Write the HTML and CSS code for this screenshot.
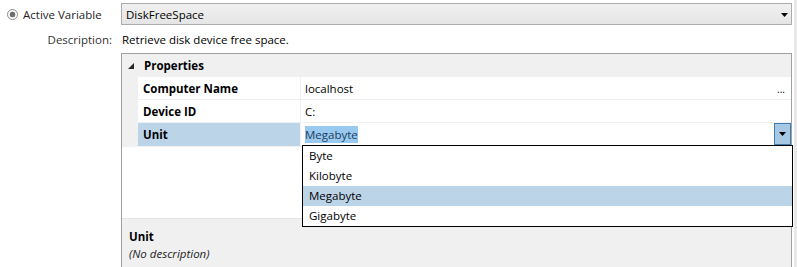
FILE: index.html
```html
<!DOCTYPE html>
<html lang="en">
<head>
    <meta charset="UTF-8">
    <title>Active Variable</title>
    <link rel="stylesheet" href="styles.css">
</head>
<body>
    <div class="page">
        <div class="content">
            <div class="var-row">
                <label class="radio-label"><span class="radio"></span>Active Variable</label>
                <div class="combo">
                    <span>DiskFreeSpace</span>
                    <svg class="arrow" width="7" height="4" viewBox="0 0 7 4"><polygon points="0,0 7,0 3.5,4" fill="#000"/></svg>
                </div>
            </div>

            <div class="desc-row">
                <span class="desc-label">Description:</span>
                <span class="desc-text">Retrieve disk device free space.</span>
            </div>

            <div class="grid">
                <div class="grid-header">
                    <svg class="expander" width="6" height="6" viewBox="0 0 6 6"><polygon points="6,0 6,6 0,6" fill="#262626"/></svg>
                    Properties
                </div>

                <div class="prop-row">
                    <div class="gutter"></div>
                    <div class="prop-name">Computer Name</div>
                    <div class="prop-value">localhost<span class="ellipsis">...</span></div>
                </div>
                <div class="prop-row">
                    <div class="gutter"></div>
                    <div class="prop-name">Device ID</div>
                    <div class="prop-value">C:</div>
                </div>
                <div class="prop-row selected">
                    <div class="gutter"></div>
                    <div class="prop-name">Unit</div>
                    <div class="prop-value">
                        <span class="text-selected">Megabyte</span>
                        <span class="drop-btn">
                            <svg width="7" height="4" viewBox="0 0 7 4"><polygon points="0,0 7,0 3.5,4" fill="#000"/></svg>
                        </span>
                    </div>
                </div>

                <div class="grid-empty"></div>

                <div class="help">
                    <div class="help-title">Unit</div>
                    <div class="help-text">(No description)</div>
                </div>

                <!-- liste ouverte du combo Unit -->
                <ul class="popup">
                    <li>Byte</li>
                    <li>Kilobyte</li>
                    <li class="current">Megabyte</li>
                    <li>Gigabyte</li>
                </ul>
            </div>
        </div>
        <div class="scroll-strip"></div>
    </div>
</body>
</html>
```

FILE: styles.css
```css
body {
    margin: 0;
    background-color: #fff;
    font-family: "Open Sans", "Noto Sans", sans-serif;
    font-size: 11.5px;
    color: #000;
    overflow: hidden;
}
.page {
    display: flex;
    width: 797px;
    height: 267px;
    overflow: hidden;
}
.content {
    width: 792px;
    padding-right: 2px;
}
.scroll-strip {
    width: 3px;
    background-color: #e8e8e8;
}
.var-row {
    display: grid;
    grid-template-columns: 121px 1fr;
    margin-top: 3px;
    height: 22px;
}
.radio-label {
    display: flex;
    align-items: center;
    gap: 5px;
    padding-left: 7px;
    color: #1e1e1e;
}
.radio {
    width: 9px;
    height: 9px;
    border: 1px solid #8c8c8c;
    border-radius: 50%;
    box-sizing: content-box;
    background: radial-gradient(circle, #6e6e6e 0, #6e6e6e 2.6px, #fff 3.2px);
}
.combo {
    display: flex;
    align-items: center;
    justify-content: space-between;
    box-sizing: border-box;
    height: 22px;
    padding: 0 3px 0 4px;
    border: 1px solid #acacac;
    background: linear-gradient(#f0f0f0, #e5e5e5);
}
.combo .arrow {
    margin-top: 1px;
}
.desc-row {
    display: grid;
    grid-template-columns: 121px 1fr;
    align-items: center;
    height: 28px;
    padding-top: 1px;
    box-sizing: border-box;
}
.desc-label {
    text-align: right;
    padding-right: 9px;
    color: #333;
}
.desc-text {
    padding-left: 1px;
}
.grid {
    position: relative;
    margin-left: 121px;
    height: 214px;
    border: 1px solid #a0a0a0;
    border-bottom: none;
    display: flex;
    flex-direction: column;
}
.grid-header {
    display: flex;
    align-items: center;
    height: 23px;
    padding-left: 6px;
    gap: 10px;
    background-color: #f0f0f0;
    font-weight: bold;
}
.prop-row {
    display: grid;
    grid-template-columns: 16px 163px 1fr;
    height: 23px;
}
.gutter {
    background-color: #f0f0f0;
}
.prop-name,
.prop-value {
    display: flex;
    align-items: center;
    border-bottom: 1px solid #f0f0f0;
}
.prop-name {
    padding-left: 5px;
    font-weight: bold;
    border-right: 1px solid #f0f0f0;
}
.prop-value {
    justify-content: space-between;
    padding-left: 4px;
}
.ellipsis {
    margin-right: 6px;
    margin-top: 2px;
    font-size: 10px;
}
.selected .prop-name {
    background-color: #bcd4e8;
}
.text-selected {
    background-color: #99c9ef;
    color: #1c3e5e;
    padding: 1px 0;
}
.drop-btn {
    display: flex;
    align-items: center;
    justify-content: center;
    box-sizing: border-box;
    width: 17px;
    height: 22px;
    border: 1px solid #3c7fb1;
    background-color: #a6c8e4;
    margin-bottom: 1px;
}
.grid-empty {
    flex: 1;
}
.help {
    box-sizing: border-box;
    height: 50px;
    border-top: 1px solid #e3e3e3;
    background-color: #f0f0f0;
    padding: 9px 7px 0;
}
.help-title {
    font-weight: bold;
    line-height: 17px;
}
.help-text {
    font-style: italic;
    line-height: 17px;
    color: #222;
}
.popup {
    position: absolute;
    left: 180px;
    top: 91px;
    width: 489px;
    margin: 0;
    padding: 0;
    list-style: none;
    border: 1px solid #000;
    background-color: #fff;
}
.popup li {
    height: 20px;
    line-height: 20px;
    padding-left: 6px;
}
.popup li.current {
    background-color: #bcd4e8;
}
```
